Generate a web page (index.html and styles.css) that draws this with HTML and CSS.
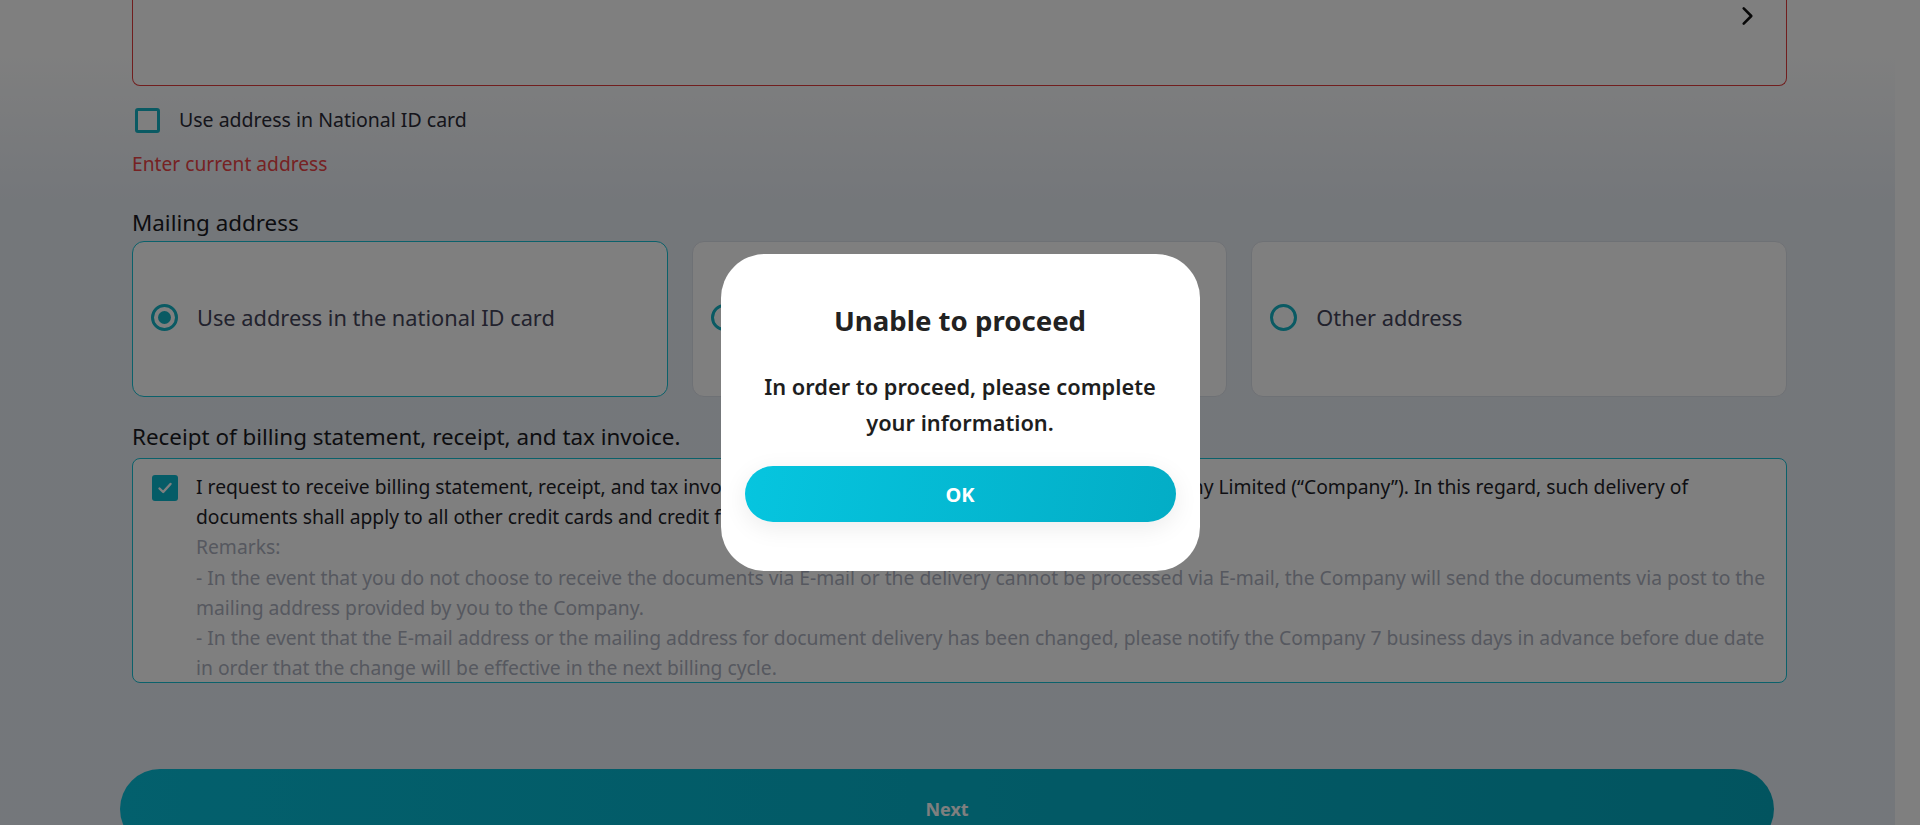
FILE: index.html
```html
<!DOCTYPE html>
<html lang="en">
<head>
<meta charset="utf-8">
<title>Application</title>
<link rel="stylesheet" href="styles.css">
</head>
<body>
<div class="page">
  <div class="form">
    <div class="address-card error">
      <svg class="chev" width="12" height="18" viewBox="0 0 12 18"><path d="M2.5 2 L9.5 9 L2.5 16" fill="none" stroke="#111" stroke-width="2.4" stroke-linecap="round" stroke-linejoin="round"/></svg>
    </div>

    <label class="check-row">
      <span class="checkbox"></span>
      <span class="check-label">Use address in National ID card</span>
    </label>

    <div class="error-text">Enter current address</div>

    <div class="section-label">Mailing address</div>
    <div class="options">
      <div class="option selected">
        <span class="radio on"></span>
        <span class="option-text">Use address in the national ID card</span>
      </div>
      <div class="option">
        <span class="radio"></span>
        <span class="option-text">Use current address</span>
      </div>
      <div class="option">
        <span class="radio"></span>
        <span class="option-text">Other address</span>
      </div>
    </div>

    <div class="section-label receipt-label">Receipt of billing statement, receipt, and tax invoice.</div>
    <div class="consent">
      <span class="checkbox filled">
        <svg width="18" height="18" viewBox="0 0 18 18"><path d="M3.5 9.5 L7.2 13 L14.5 5" fill="none" stroke="#fff" stroke-width="2.4" stroke-linecap="round" stroke-linejoin="round"/></svg>
      </span>
      <div class="consent-text">
        <p class="main">I request to receive billing statement, receipt, and tax invoice via my E-mail from Krungthai Card Public Company Limited (“Company”). In this regard, such delivery of documents shall apply to all other credit cards and credit facilities.</p>
        <p class="remark">Remarks:</p>
        <p class="remark">- In the event that you do not choose to receive the documents via E-mail or the delivery cannot be processed via E-mail, the Company will send the documents via post to the mailing address provided by you to the Company.</p>
        <p class="remark">- In the event that the E-mail address or the mailing address for document delivery has been changed, please notify the Company 7 business days in advance before due date in order that the change will be effective in the next billing cycle.</p>
      </div>
    </div>

    <button class="next-btn" type="button">Next</button>
  </div>
</div>

<div class="overlay">
  <div class="modal">
    <h2 class="modal-title">Unable to proceed</h2>
    <p class="modal-body">In order to proceed, please complete your information.</p>
    <button class="ok-btn" type="button">OK</button>
  </div>
</div>
</body>
</html>
```

FILE: styles.css
```css
html, body {
  margin: 0;
  padding: 0;
  background: #ffffff;
  height: 100%;
  overflow: hidden;
}

body {
  font-family: "Noto Sans", "Open Sans", sans-serif;
  color: #222230;
}

.page {
  width: 1895px;
  min-height: 1000px;
  margin-top: -60px;
  background: linear-gradient(180deg, #ffffff 0px, #ffffff 110px, #e9eef5 260px, #e8eef6 100%);
}

.form {
  width: 1655px;
  padding-left: 132px;
}

.address-card {
  height: 146px;
  box-sizing: border-box;
  border: 1px solid #e23d3d;
  border-top: none;
  border-radius: 0 0 8px 8px;
  background: #ffffff;
  display: flex;
  justify-content: flex-end;
  align-items: flex-start;
  padding: 66px 32px 0 0;
}

.chev {
  display: block;
  width: 13px;
  height: 20px;
}

.check-row {
  display: flex;
  align-items: center;
  gap: 19px;
  margin-top: 21px;
  margin-left: 3px;
}

.checkbox {
  width: 25px;
  height: 25px;
  box-sizing: border-box;
  border: 3px solid #14b4c6;
  border-radius: 3px;
  background: #ffffff;
  flex: none;
  display: flex;
  align-items: center;
  justify-content: center;
}

.checkbox.filled {
  width: 26px;
  height: 26px;
  background: #0ab9cf;
  border: none;
  border-radius: 3px;
}

.check-label {
  font-size: 19.5px;
  line-height: 26px;
  color: #2a2a36;
}

.error-text {
  margin-top: 17px;
  font-size: 19.2px;
  line-height: 28px;
  color: #ec4446;
}

.section-label {
  margin-top: 30px;
  font-size: 22.4px;
  line-height: 30px;
  color: #1a1a22;
}

.options {
  display: grid;
  grid-template-columns: repeat(3, 1fr);
  gap: 24px;
  margin-top: 3px;
}

.option {
  height: 156px;
  box-sizing: border-box;
  border: 1px solid #dde2ea;
  border-radius: 12px;
  background: #ffffff;
  display: flex;
  align-items: center;
  gap: 19px;
  padding-left: 18px;
  padding-bottom: 4px;
}

.option.selected {
  border-color: #16c2d6;
}

.radio {
  width: 27px;
  height: 27px;
  box-sizing: border-box;
  border: 3px solid #14b4c6;
  border-radius: 50%;
  flex: none;
  position: relative;
}

.radio.on::after {
  content: "";
  position: absolute;
  left: 4px;
  top: 4px;
  width: 13px;
  height: 13px;
  border-radius: 50%;
  background: #14b4c6;
}

.option-text {
  font-size: 21.8px;
  color: #44445a;
}

.receipt-label {
  margin-top: 25px;
}

.consent {
  margin-top: 6px;
  border: 1px solid #16c2d6;
  border-radius: 8px;
  background: #ffffff;
  display: flex;
  align-items: flex-start;
  gap: 18px;
  padding: 13px 13px 0 19px;
  height: 225px;
  box-sizing: border-box;
}

.consent .checkbox.filled {
  margin-top: 3px;
}

.consent-text p {
  margin: 0;
  font-size: 19.3px;
  line-height: 30.2px;
}

.consent-text .main {
  color: #1e1e28;
}

.consent-text .remark {
  color: #acb1bf;
}

.next-btn {
  display: block;
  margin-top: 86px;
  margin-left: -12px;
  width: 1654px;
  height: 80px;
  border: none;
  border-radius: 40px;
  background: linear-gradient(90deg, #06c0da 0%, #04a9bf 100%);
  color: #ffffff;
  font-family: "Noto Sans", "Open Sans", sans-serif;
  font-weight: 700;
  font-size: 18px;
}

.overlay {
  position: fixed;
  inset: 0;
  background: rgba(0, 0, 0, 0.5);
  display: flex;
  align-items: center;
  justify-content: center;
}

.modal {
  width: 479px;
  box-sizing: border-box;
  background: #ffffff;
  border-radius: 44px;
  padding: 48px 24px 49px;
  text-align: center;
}

.modal-title {
  margin: 0;
  font-size: 27.6px;
  line-height: 36px;
  font-weight: 700;
  color: #222222;
}

.modal-body {
  margin: 31px 10px 0;
  font-size: 21.8px;
  line-height: 36px;
  font-weight: 600;
  color: #1e1e1e;
}

.ok-btn {
  display: block;
  width: 100%;
  height: 56px;
  margin-top: 25px;
  border: none;
  border-radius: 28px;
  background: linear-gradient(100deg, #06c5df 0%, #03adc6 100%);
  box-shadow: 0 6px 24px rgba(0, 0, 0, 0.08);
  color: #ffffff;
  font-family: "Noto Sans", "Open Sans", sans-serif;
  font-weight: 700;
  font-size: 20px;
}
```
